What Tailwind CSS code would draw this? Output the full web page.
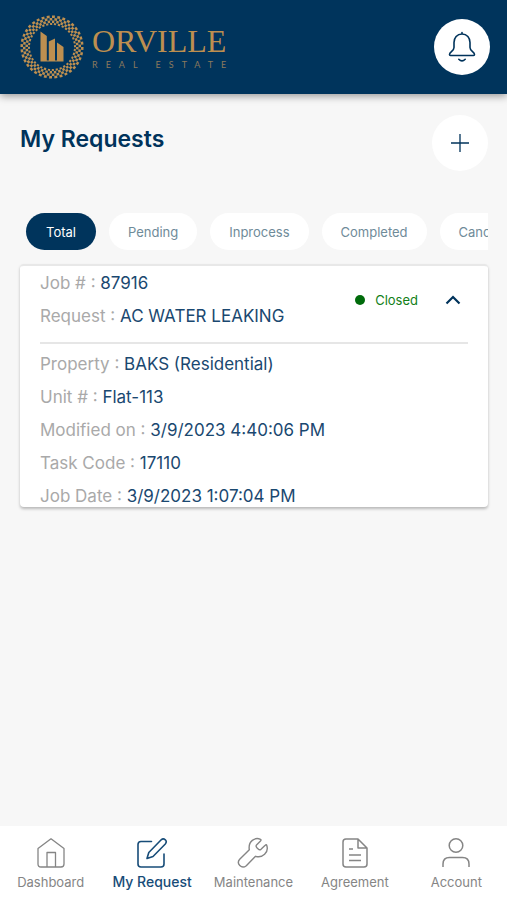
<!DOCTYPE html>
<html lang="en">
<head>
<meta charset="utf-8">
<meta name="viewport" content="width=device-width, initial-scale=1">
<title>My Requests</title>
<script src="https://cdn.jsdelivr.net/npm/@tailwindcss/browser@4"></script>
</head>
<body class="min-h-screen flex flex-col bg-[#f7f7f7] font-['Inter','Liberation_Sans',sans-serif] text-[#00335b]">

<header class="flex items-center justify-between h-[94px] pl-5 pr-[17px] bg-[#00345c] shadow-[0_2px_8px_rgba(0,0,0,0.4)]">
  <a href="#" class="flex items-center gap-2 text-[#bd8f50]" aria-label="Orville Real Estate">
    <svg class="w-16 h-16" viewBox="0 0 64 64" fill="none" stroke="currentColor" stroke-width="2.500" aria-hidden="true">
      <circle cx="32" cy="32" r="30.300" pathLength="72" stroke-dasharray="1.100 0.900"/>
      <circle cx="32" cy="32" r="27.800" pathLength="72" stroke-dasharray="1.100 0.900" stroke-dashoffset="1"/>
      <circle cx="32" cy="32" r="25.300" pathLength="72" stroke-dasharray="1.100 0.900"/>
      <circle cx="32" cy="32" r="23" pathLength="72" stroke-width="2" stroke-dasharray="1.100 0.900" stroke-dashoffset="1"/>
      <path fill="currentColor" stroke="none" d="M20.500 16.500 26.800 21V45.500H28.800V26.500L35 23.500V45.500H37V27.500L43.500 32V46.500H20.500Z"/>
    </svg>
    <span class="flex flex-col">
      <span class="font-['Liberation_Serif',serif] text-[32px] leading-9">ORVILLE</span>
      <span class="font-['Lato',sans-serif] text-[9px] leading-3 tracking-[8px] text-[#8b795c]">REAL ESTATE</span>
    </span>
  </a>
  <button type="button" aria-label="Notifications" class="grid place-items-center size-14 rounded-full bg-white">
    <svg class="size-8" viewBox="0 0 32 32" fill="none" stroke="currentColor" stroke-width="1.600" stroke-linecap="round" stroke-linejoin="round" aria-hidden="true">
      <path d="M16 1.500V3M16 3C11 3 8 6.800 8 11.500V16.500C8 20 3.500 21 3.500 23.500Q3.500 24.500 4.500 24.500H27.500Q28.500 24.500 28.500 23.500C28.500 21 24 20 24 16.500V11.500C24 6.800 21 3 16 3Z"/>
      <path d="M12.800 28.300Q16 31.500 19.200 28.300"/>
    </svg>
  </button>
</header>

<main class="flex-1 pl-5 pr-[19px] pt-[21px]">
  <div class="flex items-start justify-between">
    <h1 class="pt-2 text-[23px] leading-8 font-semibold">My Requests</h1>
    <button type="button" aria-label="Add request" class="grid place-items-center size-14 rounded-full bg-white">
      <svg class="size-5" viewBox="0 0 20 20" fill="none" stroke="currentColor" stroke-width="1.300" aria-hidden="true"><path d="M10 1V19M1 10H19"/></svg>
    </button>
  </div>

  <div class="mt-[42px] pl-[6px] flex gap-[13px] overflow-hidden text-[13px] leading-5 text-[#6f8b99]">
    <button type="button" class="shrink-0 h-[37px] px-5 rounded-full bg-[#00345c] text-white">Total</button>
    <button type="button" class="shrink-0 h-[37px] px-[19px] rounded-full bg-white">Pending</button>
    <button type="button" class="shrink-0 h-[37px] px-[19px] rounded-full bg-white">Inprocess</button>
    <button type="button" class="shrink-0 h-[37px] px-[19px] rounded-full bg-white">Completed</button>
    <button type="button" class="shrink-0 h-[37px] px-[19px] rounded-full bg-white">Cancelled</button>
  </div>

  <article class="mt-[14px] px-5 rounded bg-white border-t-2 border-[#e8e8e8] shadow-[0_2px_3px_rgba(0,0,0,0.25)] text-[17px] leading-[33px] text-[#1a4870]">
    <div class="flex items-center justify-between pt-[1px] pb-[9px] border-b-2 border-[#e6e6e6]">
      <div>
        <p><span class="text-[#a9a9a9]">Job # :</span> 87916</p>
        <p><span class="text-[#a9a9a9]">Request :</span> AC WATER LEAKING</p>
      </div>
      <div class="flex items-center gap-[10px] pr-[6px] text-[13px] leading-5 text-[#138018]">
        <span class="size-[10px] rounded-full bg-[#006b0b]"></span>
        <span>Closed</span>
        <button type="button" aria-label="Collapse request" class="ml-4 text-[#00335b]">
          <svg class="w-[18px] h-[18px]" viewBox="0 0 18 18" fill="none" stroke="currentColor" stroke-width="2.200" aria-hidden="true"><path d="M2.500 12.500 9 6 15.500 12.500"/></svg>
        </button>
      </div>
    </div>
    <div class="h-[163px] pt-1">
      <p><span class="text-[#a9a9a9]">Property :</span> BAKS (Residential)</p>
      <p><span class="text-[#a9a9a9]">Unit # :</span> Flat-113</p>
      <p><span class="text-[#a9a9a9]">Modified on :</span> 3/9/2023 4:40:06 PM</p>
      <p><span class="text-[#a9a9a9]">Task Code :</span> 17110</p>
      <p><span class="text-[#a9a9a9]">Job Date :</span> 3/9/2023 1:07:04 PM</p>
    </div>
  </article>
</main>

<nav aria-label="Main" class="grid grid-cols-5 h-[74px] pt-[11px] bg-white text-[13px] leading-5 text-[#858585]">
  <a href="#" class="flex flex-col items-center gap-[3px]">
    <svg class="size-8" viewBox="0 0 32 32" fill="none" stroke="currentColor" stroke-width="1.300" stroke-linejoin="round" aria-hidden="true"><path d="M3 11.500 16 1.800 29 11.500V27Q29 30 26 30H6Q3 30 3 27ZM12 30V15.500H20.500V30"/></svg>
    <span>Dashboard</span>
  </a>
  <a href="#" aria-current="page" class="flex flex-col items-center gap-[3px] text-[#174c78]">
    <svg class="size-8" viewBox="0 0 32 32" fill="none" stroke="currentColor" stroke-width="1.600" stroke-linejoin="round" stroke-linecap="round" aria-hidden="true"><path d="M15.500 4.500H5Q2 4.500 2 7.500V27Q2 30 5 30H25Q28 30 28 27V17M11 21.500 12.800 15.500 25.200 2.800Q27.200 1 29.300 2.800 31.200 4.800 29.300 7L17 19.500Z"/></svg>
    <span class="text-sm font-medium">My Request</span>
  </a>
  <a href="#" class="flex flex-col items-center gap-[3px]">
    <svg class="size-8" viewBox="0 0 32 32" fill="none" stroke="currentColor" stroke-width="1.400" stroke-linejoin="round" aria-hidden="true"><path d="M23.500 2.300C18 0 11 4 12.300 12.700L2.700 22.300C-1 26.500 4.500 32.500 9.300 28.700L18.500 19.300C25.500 21.500 32 15.500 29.800 8.500Q29.300 7.200 28.200 8.300L24 12.300Q22.500 13.300 21.200 12 18.200 9.300 19.500 8L23.500 4Q24.500 3 23.500 2.300Z"/></svg>
    <span>Maintenance</span>
  </a>
  <a href="#" class="flex flex-col items-center gap-[3px]">
    <svg class="size-8" viewBox="0 0 32 32" fill="none" stroke="currentColor" stroke-width="1.500" stroke-linejoin="round" aria-hidden="true"><path d="M7 2H19L28 11V27Q28 30 25 30H7Q4 30 4 27V5Q4 2 7 2ZM19 2V11H28M10 12H14M10 18H22M10 23.500H22"/></svg>
    <span>Agreement</span>
  </a>
  <a href="#" class="flex flex-col items-center gap-[3px]">
    <svg class="size-8" viewBox="0 0 32 32" fill="none" stroke="currentColor" stroke-width="1.500" aria-hidden="true"><circle cx="16" cy="8.500" r="6.800"/><path d="M3 30V27Q3 20.500 9.500 20.500H22.500Q29 20.500 29 27V30"/></svg>
    <span>Account</span>
  </a>
</nav>
</body>
</html>
